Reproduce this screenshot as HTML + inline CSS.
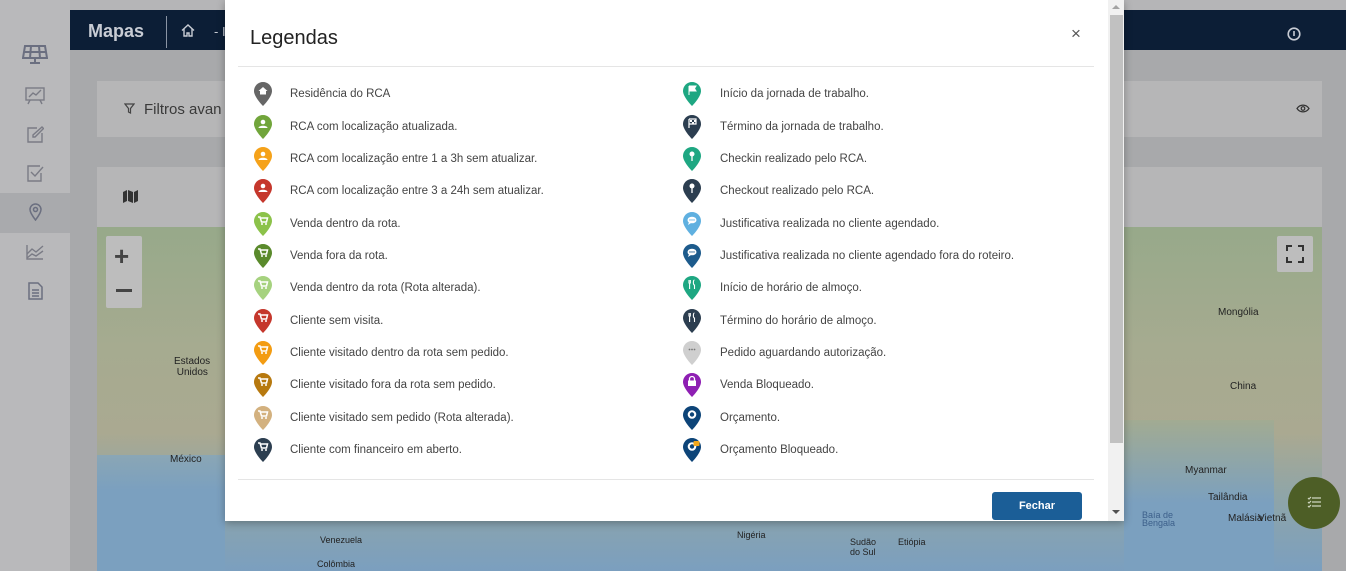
<!DOCTYPE html>
<html><head><meta charset="utf-8"><style>
*{box-sizing:border-box;margin:0;padding:0}
body{width:1346px;height:571px;overflow:hidden;position:relative;background:#a8a9ab;font-family:"Liberation Sans",sans-serif}
.abs{position:absolute}
.side{left:0;top:0;width:70px;height:571px;background:#b9b9bb}
.top{left:70px;top:10px;width:1276px;height:40px;background:#0c1e36}
.top0{left:0;top:0;width:1346px;height:10px;background:#b5b5b7}
.card{background:#b6b6b7}
.row{position:absolute;height:22px;display:flex;align-items:center;font-size:11.5px;color:#444}
.row svg{position:absolute;left:0;top:-1px}
.row span{position:absolute;white-space:nowrap;top:5px}
</style></head><body>
<div class="abs top0"></div>
<div class="abs side"></div>
<div class="abs" style="left:0;top:193px;width:70px;height:40px;background:#a9aaad"></div>
<svg class="abs" style="left:22px;top:44px" width="26" height="22" viewBox="0 0 26 22" fill="none" stroke="#6b6f80" stroke-width="2"><path d="M3 2h20l2 12H1z"/><path d="M9 2 8 14M17 2l1 12M2 8h22"/><path d="M13 14v4M8 19h10"/></svg>
<svg class="abs" style="left:25px;top:86px" width="20" height="20" viewBox="0 0 20 20" fill="none" stroke="#7a7b85" stroke-width="1.4"><rect x="1" y="2" width="18" height="12"/><path d="M4 11l4-4 3 2 5-5M5 14l-2 4M15 14l2 4"/></svg>
<svg class="abs" style="left:27px;top:126px" width="17" height="17" viewBox="0 0 17 17" fill="none" stroke="#7a7b85" stroke-width="1.4"><path d="M10 2H1v14h14V7"/><path d="M15 1l1.5 1.5L8 11H6V9z"/></svg>
<svg class="abs" style="left:27px;top:165px" width="17" height="17" viewBox="0 0 17 17" fill="none" stroke="#7a7b85" stroke-width="1.4"><path d="M14 8v8H1V1h12"/><path d="M4 7l4 4 8-9"/></svg>
<svg class="abs" style="left:29px;top:203px" width="13" height="18" viewBox="0 0 13 18" fill="none" stroke="#6b6f80" stroke-width="1.5"><path d="M6.5 17S1 10 1 6.5a5.5 5.5 0 0 1 11 0C12 10 6.5 17 6.5 17z"/><circle cx="6.5" cy="6.5" r="2"/></svg>
<svg class="abs" style="left:26px;top:244px" width="18" height="16" viewBox="0 0 18 16" fill="none" stroke="#7a7b85" stroke-width="1.4"><path d="M1 1v14h16"/><path d="M1 10l5-5 4 3 7-6M1 14l5-4 4 2 7-5"/></svg>
<svg class="abs" style="left:28px;top:282px" width="15" height="18" viewBox="0 0 15 18" fill="none" stroke="#6b6f80" stroke-width="1.5"><path d="M1 1h9l4 4v12H1z"/><path d="M4 8h7M4 11h7M4 14h7"/></svg>
<div class="abs top"></div>
<div class="abs" style="left:88px;top:21px;color:#c8ccd4;font-weight:bold;font-size:18px">Mapas</div>
<div class="abs" style="left:166px;top:16px;width:1px;height:32px;background:#8a94a4"></div>
<svg class="abs" style="left:181px;top:24px" width="14" height="13" viewBox="0 0 14 13" fill="none" stroke="#c8ccd4" stroke-width="1.4"><path d="M1 6.5 7 1l6 5.5M3 5v7h3V9h2v3h3V5"/></svg>
<div class="abs" style="left:214px;top:24px;color:#c8ccd4;font-size:13px">- I</div>
<svg class="abs" style="left:1287px;top:27px" width="14" height="14" viewBox="0 0 14 14" fill="none" stroke="#c8ccd4" stroke-width="1.6"><circle cx="7" cy="7" r="5.8"/><path d="M7 4v5"/></svg>
<div class="abs card" style="left:97px;top:81px;width:1225px;height:56px"></div>
<svg class="abs" style="left:124px;top:103px" width="11" height="11" viewBox="0 0 11 11" fill="none" stroke="#444" stroke-width="1.2"><path d="M1 1h9L6.5 5.5V10l-2-1V5.5z"/></svg>
<div class="abs" style="left:144px;top:101px;font-size:15px;color:#3a3a3a">Filtros avan</div>
<svg class="abs" style="left:1296px;top:104px" width="14" height="9" viewBox="0 0 14 9" fill="none" stroke="#333" stroke-width="1.2"><path d="M1 4.5C4 0 10 0 13 4.5 10 9 4 9 1 4.5z"/><circle cx="7" cy="4.5" r="1.8"/></svg>
<div class="abs card" style="left:97px;top:167px;width:1225px;height:60px"></div>
<svg class="abs" style="left:123px;top:190px" width="15" height="13" viewBox="0 0 15 13" fill="#333"><path d="M0 2l4-2v11l-4 2zM5 0l5 2v11l-5-2zM11 2l4-2v11l-4 2z"/></svg>
<div class="abs" style="left:97px;top:227px;width:1225px;height:344px;background:linear-gradient(180deg,#97a98a 0%,#a6ab90 35%,#aaa991 60%,#8fa5a8 78%,#7b9fbf 100%)"></div>
<div class="abs" style="left:97px;top:455px;width:128px;height:116px;background:linear-gradient(180deg,#8aa6b5,#7ba0bf 30%)"></div>
<div class="abs" style="left:1124px;top:420px;width:150px;height:151px;background:linear-gradient(180deg,#a2ab92,#7ba0bf 55%)"></div>
<div class="abs" style="left:106px;top:236px;width:36px;height:72px;background:#bdbdbd;border-radius:2px"></div>
<div class="abs" style="left:114px;top:241px;font-size:26px;color:#444;font-weight:bold">+</div>
<div class="abs" style="left:116px;top:289px;width:16px;height:3px;background:#444"></div>
<div class="abs" style="left:174px;top:356px;font-size:10px;color:#222">Estados<br>&nbsp;Unidos</div>
<div class="abs" style="left:170px;top:454px;font-size:10px;color:#222">México</div>
<div class="abs" style="left:1277px;top:236px;width:36px;height:36px;background:#bdbdbd;border-radius:2px"></div>
<svg class="abs" style="left:1286px;top:245px" width="18" height="18" viewBox="0 0 18 18" fill="none" stroke="#333" stroke-width="2"><path d="M1 6V1h5M12 1h5v5M17 12v5h-5M6 17H1v-5"/></svg>
<div class="abs" style="left:1218px;top:307px;font-size:10px;color:#222">Mongólia</div>
<div class="abs" style="left:1230px;top:381px;font-size:10px;color:#222">China</div>
<div class="abs" style="left:1185px;top:465px;font-size:10px;color:#222">Myanmar</div>
<div class="abs" style="left:1208px;top:492px;font-size:10px;color:#222">Tailândia</div>
<div class="abs" style="left:1258px;top:513px;font-size:10px;color:#222">Vietnã</div>
<div class="abs" style="left:1142px;top:511px;font-size:9px;color:#3c5f8a;line-height:8px">Baía de<br>Bengala</div>
<div class="abs" style="left:1228px;top:513px;font-size:10px;color:#222">Malásia</div>
<div class="abs" style="left:320px;top:535px;font-size:9px;color:#222">Venezuela</div>
<div class="abs" style="left:317px;top:559px;font-size:9px;color:#222">Colômbia</div>
<div class="abs" style="left:737px;top:530px;font-size:9px;color:#222">Nigéria</div>
<div class="abs" style="left:850px;top:537px;font-size:9px;color:#222">Sudão<br>do Sul</div>
<div class="abs" style="left:898px;top:537px;font-size:9px;color:#222">Etiópia</div>
<div class="abs" style="left:1288px;top:477px;width:52px;height:52px;border-radius:50%;background:#4d5e26"></div>
<svg class="abs" style="left:1307px;top:496px" width="14" height="12" viewBox="0 0 14 12" fill="none" stroke="#cfd6c0" stroke-width="1.2"><path d="M5 2h9M5 6h9M5 10h9M1 2l1 1 2-2M1 6l1 1 2-2M1 10l1 1 2-2"/></svg>
<div class="abs" style="left:225px;top:0;width:899px;height:521px;background:#fff;box-shadow:0 2px 8px rgba(0,0,0,.3)"></div>
<div class="abs" style="left:1108px;top:0;width:16px;height:521px;background:#f1f1f1"></div>
<div class="abs" style="left:1110px;top:15px;width:13px;height:428px;background:#c1c1c1"></div>
<div class="abs" style="left:1112px;top:5px;border:4px solid transparent;border-bottom-color:#a3a3a3;border-top:0"></div>
<div class="abs" style="left:1112px;top:510px;border:4px solid transparent;border-top-color:#505050;border-bottom:0"></div>
<div class="abs" style="left:250px;top:27px;font-size:20px;color:#222">Legendas</div>
<div class="abs" style="left:1071px;top:24px;font-size:17px;color:#555">×</div>
<div class="abs" style="left:238px;top:66px;width:856px;height:1px;background:#e5e5e5"></div>
<div class="abs" style="left:238px;top:479px;width:856px;height:1px;background:#e5e5e5"></div>
<div class="abs" style="left:992px;top:492px;width:90px;height:28px;background:#1b5e97;border-radius:3px;color:#fff;font-size:11px;font-weight:bold;text-align:center;line-height:28px">Fechar</div>
<div style="position:absolute;left:0;top:1px">
<div class="row" style="left:254px;top:82px"><svg width="18" height="24" viewBox="0 0 18 24"><path d="M9 0C4 0 0 4 0 9c0 6 9 15 9 15s9-9 9-15C18 4 14 0 9 0z" fill="#666"/><path d="M4.5 9 9 5l4.5 4h-1.5v3.5h-6V9z" fill="#fff"/></svg><span style="left:36px">Residência do RCA</span></div>
<div class="row" style="left:254px;top:115px"><svg width="18" height="24" viewBox="0 0 18 24"><path d="M9 0C4 0 0 4 0 9c0 6 9 15 9 15s9-9 9-15C18 4 14 0 9 0z" fill="#71a53b"/><circle cx="9" cy="7" r="2.3" fill="#fff"/><path d="M4.5 13c0-3 9-3 9 0z" fill="#fff"/></svg><span style="left:36px">RCA com localização atualizada.</span></div>
<div class="row" style="left:254px;top:147px"><svg width="18" height="24" viewBox="0 0 18 24"><path d="M9 0C4 0 0 4 0 9c0 6 9 15 9 15s9-9 9-15C18 4 14 0 9 0z" fill="#f5a21a"/><circle cx="9" cy="7" r="2.3" fill="#fff"/><path d="M4.5 13c0-3 9-3 9 0z" fill="#fff"/></svg><span style="left:36px">RCA com localização entre 1 a 3h sem atualizar.</span></div>
<div class="row" style="left:254px;top:179px"><svg width="18" height="24" viewBox="0 0 18 24"><path d="M9 0C4 0 0 4 0 9c0 6 9 15 9 15s9-9 9-15C18 4 14 0 9 0z" fill="#c5372c"/><circle cx="9" cy="7" r="2.3" fill="#fff"/><path d="M4.5 13c0-3 9-3 9 0z" fill="#fff"/></svg><span style="left:36px">RCA com localização entre 3 a 24h sem atualizar.</span></div>
<div class="row" style="left:254px;top:212px"><svg width="18" height="24" viewBox="0 0 18 24"><path d="M9 0C4 0 0 4 0 9c0 6 9 15 9 15s9-9 9-15C18 4 14 0 9 0z" fill="#8cc24a"/><path d="M4 5h2l1.5 5h5l1-4H7" fill="none" stroke="#fff" stroke-width="1.5"/><circle cx="8" cy="12" r="1" fill="#fff"/><circle cx="12" cy="12" r="1" fill="#fff"/></svg><span style="left:36px">Venda dentro da rota.</span></div>
<div class="row" style="left:254px;top:244px"><svg width="18" height="24" viewBox="0 0 18 24"><path d="M9 0C4 0 0 4 0 9c0 6 9 15 9 15s9-9 9-15C18 4 14 0 9 0z" fill="#5a8a2c"/><path d="M4 5h2l1.5 5h5l1-4H7" fill="none" stroke="#fff" stroke-width="1.5"/><circle cx="8" cy="12" r="1" fill="#fff"/><circle cx="12" cy="12" r="1" fill="#fff"/></svg><span style="left:36px">Venda fora da rota.</span></div>
<div class="row" style="left:254px;top:276px"><svg width="18" height="24" viewBox="0 0 18 24"><path d="M9 0C4 0 0 4 0 9c0 6 9 15 9 15s9-9 9-15C18 4 14 0 9 0z" fill="#a6d27f"/><path d="M4 5h2l1.5 5h5l1-4H7" fill="none" stroke="#fff" stroke-width="1.5"/><circle cx="8" cy="12" r="1" fill="#fff"/><circle cx="12" cy="12" r="1" fill="#fff"/></svg><span style="left:36px">Venda dentro da rota (Rota alterada).</span></div>
<div class="row" style="left:254px;top:309px"><svg width="18" height="24" viewBox="0 0 18 24"><path d="M9 0C4 0 0 4 0 9c0 6 9 15 9 15s9-9 9-15C18 4 14 0 9 0z" fill="#c5372c"/><path d="M4 5h2l1.5 5h5l1-4H7" fill="none" stroke="#fff" stroke-width="1.5"/><circle cx="8" cy="12" r="1" fill="#fff"/><circle cx="12" cy="12" r="1" fill="#fff"/></svg><span style="left:36px">Cliente sem visita.</span></div>
<div class="row" style="left:254px;top:341px"><svg width="18" height="24" viewBox="0 0 18 24"><path d="M9 0C4 0 0 4 0 9c0 6 9 15 9 15s9-9 9-15C18 4 14 0 9 0z" fill="#f39c12"/><path d="M4 5h2l1.5 5h5l1-4H7" fill="none" stroke="#fff" stroke-width="1.5"/><circle cx="8" cy="12" r="1" fill="#fff"/><circle cx="12" cy="12" r="1" fill="#fff"/></svg><span style="left:36px">Cliente visitado dentro da rota sem pedido.</span></div>
<div class="row" style="left:254px;top:373px"><svg width="18" height="24" viewBox="0 0 18 24"><path d="M9 0C4 0 0 4 0 9c0 6 9 15 9 15s9-9 9-15C18 4 14 0 9 0z" fill="#b7790f"/><path d="M4 5h2l1.5 5h5l1-4H7" fill="none" stroke="#fff" stroke-width="1.5"/><circle cx="8" cy="12" r="1" fill="#fff"/><circle cx="12" cy="12" r="1" fill="#fff"/></svg><span style="left:36px">Cliente visitado fora da rota sem pedido.</span></div>
<div class="row" style="left:254px;top:406px"><svg width="18" height="24" viewBox="0 0 18 24"><path d="M9 0C4 0 0 4 0 9c0 6 9 15 9 15s9-9 9-15C18 4 14 0 9 0z" fill="#d3b17f"/><path d="M4 5h2l1.5 5h5l1-4H7" fill="none" stroke="#fff" stroke-width="1.5"/><circle cx="8" cy="12" r="1" fill="#fff"/><circle cx="12" cy="12" r="1" fill="#fff"/></svg><span style="left:36px">Cliente visitado sem pedido (Rota alterada).</span></div>
<div class="row" style="left:254px;top:438px"><svg width="18" height="24" viewBox="0 0 18 24"><path d="M9 0C4 0 0 4 0 9c0 6 9 15 9 15s9-9 9-15C18 4 14 0 9 0z" fill="#2c3e50"/><path d="M4 5h2l1.5 5h5l1-4H7" fill="none" stroke="#fff" stroke-width="1.5"/><circle cx="8" cy="12" r="1" fill="#fff"/><circle cx="12" cy="12" r="1" fill="#fff"/></svg><span style="left:36px">Cliente com financeiro em aberto.</span></div>
<div class="row" style="left:683px;top:82px"><svg width="18" height="24" viewBox="0 0 18 24"><path d="M9 0C4 0 0 4 0 9c0 6 9 15 9 15s9-9 9-15C18 4 14 0 9 0z" fill="#1ea782"/><path d="M6 4v9M6 4h7l-1.5 2.5L13 9H6" fill="#fff" stroke="#fff" stroke-width="1"/></svg><span style="left:37px">Início da jornada de trabalho.</span></div>
<div class="row" style="left:683px;top:115px"><svg width="18" height="24" viewBox="0 0 18 24"><path d="M9 0C4 0 0 4 0 9c0 6 9 15 9 15s9-9 9-15C18 4 14 0 9 0z" fill="#2c3e50"/><path d="M6 4v9M6 4h7v5H6" fill="none" stroke="#fff" stroke-width="1.2"/><path d="M7 5h2v2H7zM9 7h2v2H9zM11 5h2v2h-2z" fill="#fff"/></svg><span style="left:37px">Término da jornada de trabalho.</span></div>
<div class="row" style="left:683px;top:147px"><svg width="18" height="24" viewBox="0 0 18 24"><path d="M9 0C4 0 0 4 0 9c0 6 9 15 9 15s9-9 9-15C18 4 14 0 9 0z" fill="#1ea782"/><circle cx="9" cy="7" r="2.5" fill="#fff"/><path d="M9 9v5" stroke="#fff" stroke-width="1.3"/></svg><span style="left:37px">Checkin realizado pelo RCA.</span></div>
<div class="row" style="left:683px;top:179px"><svg width="18" height="24" viewBox="0 0 18 24"><path d="M9 0C4 0 0 4 0 9c0 6 9 15 9 15s9-9 9-15C18 4 14 0 9 0z" fill="#2c3e50"/><circle cx="9" cy="7" r="2.5" fill="#fff"/><path d="M9 9v5" stroke="#fff" stroke-width="1.3"/></svg><span style="left:37px">Checkout realizado pelo RCA.</span></div>
<div class="row" style="left:683px;top:212px"><svg width="18" height="24" viewBox="0 0 18 24"><path d="M9 0C4 0 0 4 0 9c0 6 9 15 9 15s9-9 9-15C18 4 14 0 9 0z" fill="#5fb0e0"/><ellipse cx="9" cy="8" rx="4.5" ry="3.3" fill="#fff"/><path d="M6 10l-1 3 3-2z" fill="#fff"/><circle cx="7" cy="8" r=".7" fill="#5fb0e0"/><circle cx="9" cy="8" r=".7" fill="#5fb0e0"/><circle cx="11" cy="8" r=".7" fill="#5fb0e0"/></svg><span style="left:37px">Justificativa realizada no cliente agendado.</span></div>
<div class="row" style="left:683px;top:244px"><svg width="18" height="24" viewBox="0 0 18 24"><path d="M9 0C4 0 0 4 0 9c0 6 9 15 9 15s9-9 9-15C18 4 14 0 9 0z" fill="#1d5b8c"/><ellipse cx="9" cy="8" rx="4.5" ry="3.3" fill="#fff"/><path d="M6 10l-1 3 3-2z" fill="#fff"/><circle cx="7" cy="8" r=".7" fill="#1d5b8c"/><circle cx="9" cy="8" r=".7" fill="#1d5b8c"/><circle cx="11" cy="8" r=".7" fill="#1d5b8c"/></svg><span style="left:37px">Justificativa realizada no cliente agendado fora do roteiro.</span></div>
<div class="row" style="left:683px;top:276px"><svg width="18" height="24" viewBox="0 0 18 24"><path d="M9 0C4 0 0 4 0 9c0 6 9 15 9 15s9-9 9-15C18 4 14 0 9 0z" fill="#1ea782"/><path d="M6 4v3.5M7.3 4v3.5M6.6 7v6M11.5 4c-1.5 0-1.5 5 0 5v4" fill="none" stroke="#fff" stroke-width="1.1"/></svg><span style="left:37px">Início de horário de almoço.</span></div>
<div class="row" style="left:683px;top:309px"><svg width="18" height="24" viewBox="0 0 18 24"><path d="M9 0C4 0 0 4 0 9c0 6 9 15 9 15s9-9 9-15C18 4 14 0 9 0z" fill="#2c3e50"/><path d="M6 4v3.5M7.3 4v3.5M6.6 7v6M11.5 4c-1.5 0-1.5 5 0 5v4" fill="none" stroke="#fff" stroke-width="1.1"/></svg><span style="left:37px">Término do horário de almoço.</span></div>
<div class="row" style="left:683px;top:341px"><svg width="18" height="24" viewBox="0 0 18 24"><path d="M9 0C4 0 0 4 0 9c0 6 9 15 9 15s9-9 9-15C18 4 14 0 9 0z" fill="#cfcfcf"/><circle cx="6.5" cy="8.5" r=".9" fill="#777"/><circle cx="9" cy="8.5" r=".9" fill="#777"/><circle cx="11.5" cy="8.5" r=".9" fill="#777"/></svg><span style="left:37px">Pedido aguardando autorização.</span></div>
<div class="row" style="left:683px;top:373px"><svg width="18" height="24" viewBox="0 0 18 24"><path d="M9 0C4 0 0 4 0 9c0 6 9 15 9 15s9-9 9-15C18 4 14 0 9 0z" fill="#8e1fb3"/><rect x="5" y="7.5" width="8" height="5.5" fill="#fff"/><path d="M6.5 7.5V6a2.5 2.5 0 0 1 5 0v1.5" fill="none" stroke="#fff" stroke-width="1.3"/></svg><span style="left:37px">Venda Bloqueado.</span></div>
<div class="row" style="left:683px;top:406px"><svg width="18" height="24" viewBox="0 0 18 24"><path d="M9 0C4 0 0 4 0 9c0 6 9 15 9 15s9-9 9-15C18 4 14 0 9 0z" fill="#0d4478"/><circle cx="9" cy="8.5" r="4.3" fill="#fff"/><circle cx="9" cy="8.5" r="2.2" fill="#0d4478"/></svg><span style="left:37px">Orçamento.</span></div>
<div class="row" style="left:683px;top:438px"><svg width="18" height="24" viewBox="0 0 18 24"><path d="M9 0C4 0 0 4 0 9c0 6 9 15 9 15s9-9 9-15C18 4 14 0 9 0z" fill="#0d4478"/><circle cx="9" cy="8.5" r="4.3" fill="#fff"/><circle cx="9" cy="8.5" r="2.2" fill="#0d4478"/><rect x="10.5" y="3" width="6" height="5" rx="1" fill="#f3a81c"/></svg><span style="left:37px">Orçamento Bloqueado.</span></div>
</div>
</body></html>
